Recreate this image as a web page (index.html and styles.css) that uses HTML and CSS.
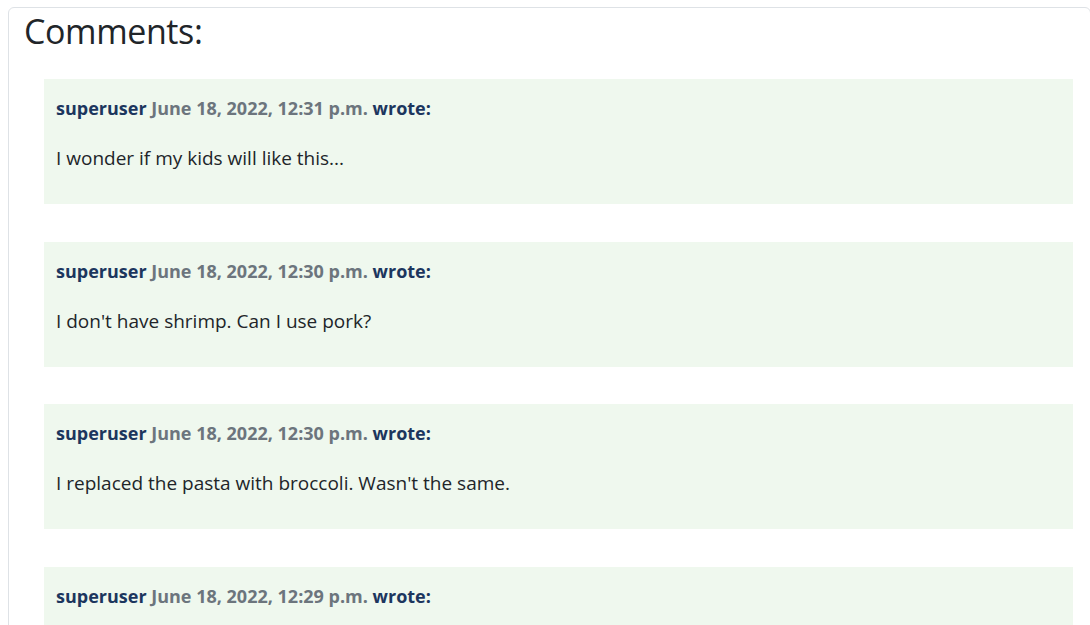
FILE: index.html
```html
<!DOCTYPE html>
<html lang="en">
<head>
<meta charset="utf-8">
<title>Comments</title>
<link rel="stylesheet" href="styles.css">
</head>
<body>
<div class="card">
  <h2 class="title">Comments:</h2>
  <div class="list">
    <div class="comment">
      <p class="meta"><span class="user">superuser</span> <span class="date">June 18, 2022, 12:31 p.m.</span> <span class="user">wrote:</span></p>
      <p class="body">I wonder if my kids will like this...</p>
    </div>
    <div class="comment">
      <p class="meta"><span class="user">superuser</span> <span class="date">June 18, 2022, 12:30 p.m.</span> <span class="user">wrote:</span></p>
      <p class="body">I don't have shrimp. Can I use pork?</p>
    </div>
    <div class="comment">
      <p class="meta"><span class="user">superuser</span> <span class="date">June 18, 2022, 12:30 p.m.</span> <span class="user">wrote:</span></p>
      <p class="body">I replaced the pasta with broccoli. Wasn't the same.</p>
    </div>
    <div class="comment">
      <p class="meta"><span class="user">superuser</span> <span class="date">June 18, 2022, 12:29 p.m.</span> <span class="user">wrote:</span></p>
      <p class="body">I think this recipe is great.</p>
    </div>
  </div>
</div>
</body>
</html>
```

FILE: styles.css
```css
html, body {
  margin: 0;
  padding: 0;
  overflow: hidden;
  background: #fff;
}
body {
  font-family: "Open Sans", "Noto Sans", sans-serif;
  font-size: 18px;
  line-height: 27px;
  color: #212529;
}
.card {
  margin: 7px 0 0 8px;
  width: 1083px;
  border: 1px solid #dee2e6;
  border-radius: 6px;
  padding: 0 15px 16px 15px;
  box-sizing: border-box;
}
.title {
  margin: 0;
  font-size: 34px;
  letter-spacing: -0.4px;
  font-weight: 400;
  line-height: 43px;
  padding-top: 2px;
}
.list {
  padding: 26px 2px 0 20px;
}
.comment {
  background: #eff8ee;
  padding: 16px 12px 14px 12px;
  margin-bottom: 37.6px;
}
.meta {
  margin: 0 0 23px 0;
  font-weight: 700;
}
.user { color: #1c365e; }
.date { color: #6c757d; }
.body {
  margin: 0 0 18px 0;
  font-size: 19px;
}
```
